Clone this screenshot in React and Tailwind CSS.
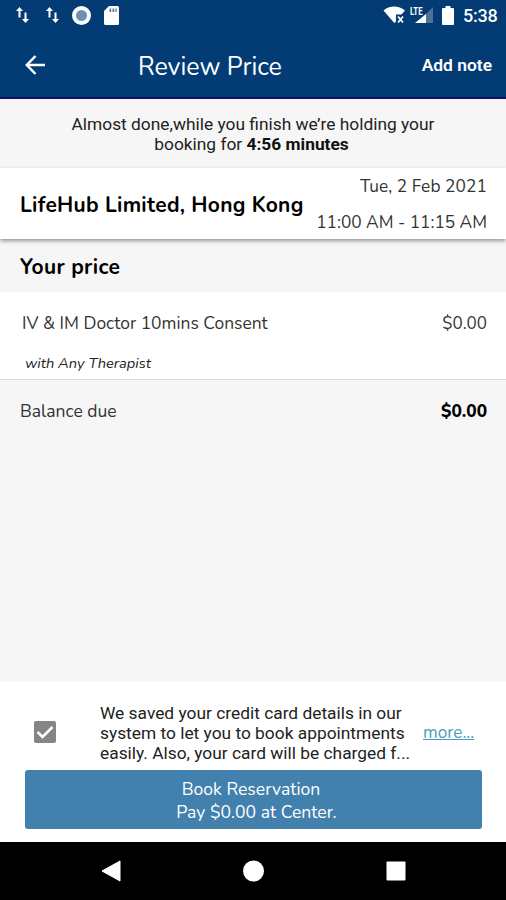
const rounded = "font-['Nunito','Noto_Sans',sans-serif]";

function DataArrows() {
  return (
    <svg width="13" height="18" viewBox="0 0 13 18" fill="#fff" className="shrink-0">
      <path d="M3.5 1 7 5H4.5v6.5h-2V5H0z" />
      <path d="M9.5 17 6 13h2.500V6.500h2V13H13z" />
    </svg>
  );
}

function StatusBar() {
  return (
    <div className="flex h-8 items-start pt-[6px] pl-4">
      <DataArrows />
      <div className="ml-[17px] flex"><DataArrows /></div>
      <div className="ml-[13px] h-[19px] w-[19px] rounded-full border-[4px] border-white bg-[#6a92b5]" />
      <svg width="15" height="19" viewBox="0 0 15 19" className="ml-[13px]">
        <path d="M5 0h8.500a1.500 1.500 0 0 1 1.500 1.500v16a1.500 1.500 0 0 1-1.500 1.500h-12A1.500 1.500 0 0 1 0 17.500V5z" fill="#fff" />
        <path d="M5.500 2.500h1.700v3.500H5.500zM8.500 2.500h1.700v3.500H8.500zM11.400 2.500h1.300v3.500h-1.300z" fill="#55789c" />
      </svg>
      <svg width="23" height="18" viewBox="0 0 23 18" className="ml-[264px]">
        <path d="M0.500 4.500C6-0.800 16-0.800 22 4.500L18.500 8.500H13V15.500L11.300 17z" fill="#fff" />
        <path d="M15 10.500l5 6M20 10.500l-5 6" stroke="#fff" strokeWidth="1.800" />
      </svg>
      <svg width="24" height="18" viewBox="0 0 24 18" className="ml-[4px]">
        <path d="M23 1v16h-7V8z" fill="#4c7297" />
        <path d="M16 8v9H5z" fill="#fff" />
        <path d="M0 0h12.500v8.800H0z" fill="#033b75" />
        <text x="0" y="8.500" fill="#fff" fontSize="11" fontWeight="700" fontFamily="Roboto, sans-serif" textLength="12.500" lengthAdjust="spacingAndGlyphs">LTE</text>
      </svg>
      <svg width="12" height="19" viewBox="0 0 12 19" className="ml-[8px]">
        <path d="M3.500 0h5v2H11a1 1 0 0 1 1 1v15a1 1 0 0 1-1 1H1a1 1 0 0 1-1-1V3a1 1 0 0 1 1-1h2.500z" fill="#fff" />
      </svg>
      <span className="ml-[9px] text-[18px] leading-[20px] font-medium tracking-[-0.2px] whitespace-nowrap text-white">5:38</span>
    </div>
  );
}

function Toolbar() {
  return (
    <div className="flex h-[67px] items-center border-b-2 border-[#120f66] pr-[14px] pl-[25px] text-white">
      <svg width="21" height="20" viewBox="0 0 21 20" fill="none" stroke="#fff" strokeWidth="2.500">
        <path d="M20 10H2M10.500 1 1.800 10l8.700 9" />
      </svg>
      <h1 className={`${rounded} mt-[5px] ml-[92px] text-[25px] leading-8 font-normal whitespace-nowrap`}>Review Price</h1>
      <span className="ml-auto text-[17.4px] leading-6 font-semibold whitespace-nowrap">Add note</span>
    </div>
  );
}

export default function App() {
  return (
    <div className="flex h-[900px] w-[506px] flex-col overflow-hidden bg-[#f6f6f6] font-['Roboto',sans-serif] text-black">
      <header className="h-[99px] shrink-0 bg-[#033b75]">
        <StatusBar />
        <Toolbar />
      </header>

      <div className="h-[69px] shrink-0 pt-[15px] text-center text-[17.35px] leading-[20px] text-[#222]">
        <p>Almost done,while you finish we’re holding your</p>
        <p className="pr-[3px]">booking for <b className="font-bold text-[#111]">4:56 minutes</b></p>
      </div>

      <section className={`${rounded} flex h-[71px] shrink-0 items-center justify-between bg-white pt-[2px] pr-[19px] pl-5 shadow-[0_2px_4px_rgba(0,0,0,0.4)]`}>
        <h2 className="pt-[2px] text-[21px] font-bold tracking-[0.29px] whitespace-nowrap">LifeHub Limited, Hong Kong</h2>
        <div className="flex flex-col items-end gap-[11px] text-[17.3px] leading-[25px] whitespace-nowrap text-[#333]">
          <span className="tracking-[0.1px]">Tue, 2 Feb 2021</span>
          <span>11:00 AM - 11:15 AM</span>
        </div>
      </section>

      <h2 className={`${rounded} flex h-[53px] shrink-0 items-center pt-[4px] pl-5 text-[21px] font-bold tracking-[0.35px]`}>Your price</h2>

      <section className={`${rounded} h-[88px] shrink-0 border-b border-[#d9d9d9] bg-white pr-[19px] pl-[22px] text-[#333]`}>
        <div className="flex h-[44px] justify-between pt-[19px] text-[17.45px] leading-[24px]">
          <span>IV &amp; IM Doctor 10mins Consent</span>
          <span className="pt-px text-[17px]">$0.00</span>
        </div>
        <p className="mt-[17px] pl-[3px] text-[14.7px] leading-[20px] text-[#222] italic">with Any Therapist</p>
      </section>

      <section className={`${rounded} flex grow justify-between pt-[19px] pr-[19px] pl-5 text-[17.5px] leading-[24px] text-[#333]`}>
        <span>Balance due</span>
        <span className="pt-px text-[17.3px] font-extrabold text-black">$0.00</span>
      </section>

      <footer className="h-[160px] shrink-0 bg-white">
        <div className="flex h-[88px] items-start pt-[21px]">
          <div className="mt-[18px] ml-[34px] flex h-[22px] w-[22px] items-center justify-center rounded-[2px] bg-[#858585]">
            <svg width="18" height="14" viewBox="0 0 18 14" fill="none" stroke="#fff" strokeWidth="2.500">
              <path d="M1.500 7 6.500 12 16.500 2" />
            </svg>
          </div>
          <p className="ml-[44px] w-[323px] text-[17.35px] leading-[20px] whitespace-nowrap text-[#222]">
            We saved your credit card details in our<br />
            system to let you to book appointments<br />
            easily. Also, your card will be charged f...
          </p>
          <a className={`${rounded} mt-[18px] text-[17.2px] leading-[24px] text-[#48a0bd] underline`}>more...</a>
        </div>
        <button className={`${rounded} ml-[25px] block h-[59px] w-[457px] rounded-[3px] bg-[#4280ad] pt-[3px] text-center text-[17.6px] leading-[23px] text-white`}>
          <span className="block pr-[5px]">Book Reservation</span>
          <span className="block pl-[6px]">Pay $0.00 at Center.</span>
        </button>
      </footer>

      <nav className="h-[58px] shrink-0 bg-black">
        <svg width="506" height="58" viewBox="0 0 506 58" fill="#fff">
          <path d="M120 19v20L102 29z" stroke="#fff" strokeLinejoin="round" />
          <circle cx="253.500" cy="29" r="10.500" />
          <rect x="386.500" y="19.500" width="19" height="19" rx="1" />
        </svg>
      </nav>
    </div>
  );
}
